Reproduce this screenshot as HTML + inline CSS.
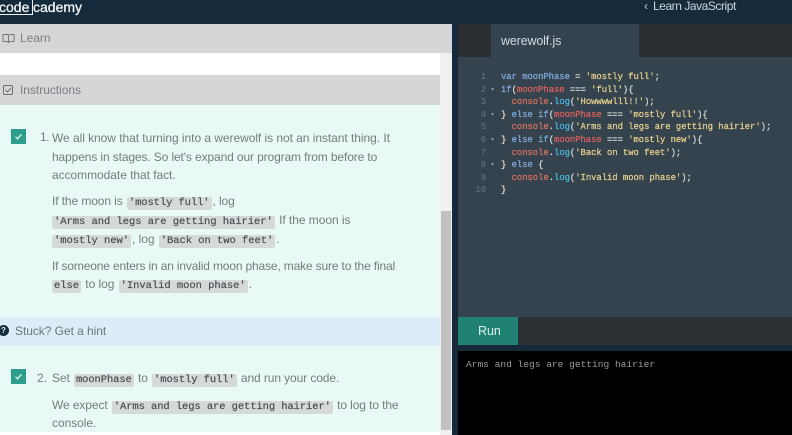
<!DOCTYPE html>
<html><head><meta charset="utf-8">
<style>
html,body{margin:0;padding:0;width:792px;height:435px;overflow:hidden;background:#fff}
body{position:relative;font-family:"Liberation Sans",sans-serif}
.b{position:absolute}
.t{position:absolute;white-space:nowrap;font-size:12px;line-height:16px;color:#757d7e;letter-spacing:-.05px}
.t code{font-family:"Liberation Mono",monospace;font-size:10.5px;line-height:13px;display:inline-block;color:#4a4f52;background:#d6d9da;padding:0 2px;border-radius:2px;margin:0 1px;-webkit-text-stroke:.2px #4a4f52;vertical-align:0}
.c{position:absolute;left:501px;white-space:pre;font:8.83px/12px "Liberation Mono",monospace;color:#d6d8d2;-webkit-text-stroke:.25px}
.n{position:absolute;width:27px;left:459px;text-align:right;font:8.83px/12px "Liberation Mono",monospace;color:#6c7883}
.a{position:absolute;left:491px;font-size:6px;line-height:12px;color:#8a949c}
.k{color:#7fa8d8}.v{color:#d9605f}.s{color:#e3cf8c}.f{color:#46b4d8}.o{color:#d4735f}
.chk{position:absolute;left:11px;width:15px;height:15px;background:#2b9f8b}
</style></head><body>
<div class="b" style="left:0;top:0;width:792px;height:24px;background:#152b3b"></div>
<div class="t" style="left:-1px;top:-1px;font-size:14px;line-height:16px;color:#eef2f4;letter-spacing:0;-webkit-text-stroke:.3px #eef2f4">code</div>
<div class="b" style="left:0;top:14px;width:32px;height:1px;background:#eef2f4"></div>
<div class="b" style="left:32px;top:0;width:1px;height:15px;background:#eef2f4"></div>
<div class="t" style="left:33px;top:-1px;font-size:14px;line-height:16px;color:#eef2f4;letter-spacing:0;-webkit-text-stroke:.3px #eef2f4">cademy</div>
<div class="t" style="left:644px;top:-2px;font-size:12px;line-height:16px;color:#c3ccd2">‹</div>
<div class="t" style="left:653px;top:-2px;font-size:12px;line-height:16px;color:#ccd4d9;letter-spacing:-.45px">Learn JavaScript</div>

<!-- left panel -->
<div class="b" style="left:440px;top:53px;width:12px;height:382px;background:#f0f0f0"></div>
<div class="b" style="left:0;top:24px;width:452px;height:29px;background:#d5d6d8"></div>
<div class="b" style="left:0;top:75px;width:440px;height:30px;background:#d5d6d8"></div>
<div class="b" style="left:0;top:105px;width:440px;height:212px;background:#e9f9f6"></div>
<div class="b" style="left:0;top:317px;width:440px;height:29px;background:#dcedf8"></div>
<div class="b" style="left:0;top:346px;width:440px;height:86px;background:#e9f9f6"></div>
<div class="b" style="left:441px;top:211px;width:10px;height:219px;background:#c1c1c1"></div>

<svg class="b" style="left:2px;top:33px" width="13" height="11" viewBox="0 0 13 11" fill="none" stroke="#77797d" stroke-width="1"><path d="M1 1.500h4.500l1 1 1-1H12v7H7.500l-1 1-1-1H1zM6.500 2.500v6.500"/></svg>
<div class="t" style="left:20px;top:30px;color:#7b7f83">Learn</div>
<svg class="b" style="left:2px;top:84px" width="12" height="12" viewBox="0 0 12 12" fill="none" stroke="#6b6f73" stroke-width="1"><rect x="1.500" y="1.500" width="9" height="9" rx="1"/><path d="M3.500 6l2 2 3.500-4"/></svg>
<div class="t" style="left:20px;top:82px;color:#7b7f83;letter-spacing:-.03px">Instructions</div>

<div class="chk" style="top:129px"></div>
<svg class="b" style="left:11px;top:129px" width="15" height="15" fill="none" stroke="#dff5ef" stroke-width="1.300"><path d="M4.500 7.800l2 2 4-4.500"/></svg>
<div class="t" style="left:40px;top:129px;letter-spacing:-.6px">1.</div>
<div class="t" style="left:52px;top:130px">We all know that turning into a werewolf is not an instant thing. It</div>
<div class="t" style="left:52px;top:149px;letter-spacing:-.12px">happens in stages. So let's expand our program from before to</div>
<div class="t" style="left:52px;top:167px">accommodate that fact.</div>
<div class="t" style="left:52px;top:193px;letter-spacing:-.1px">If the moon is <code>'mostly full'</code>, log</div>
<div class="t" style="left:52px;top:212px"><code style="margin-left:0">'Arms and legs are getting hairier'</code> If the moon is</div>
<div class="t" style="left:52px;top:231px"><code style="margin-left:0">'mostly new'</code>, log <code>'Back on two feet'</code>.</div>
<div class="t" style="left:52px;top:258px;letter-spacing:-.16px">If someone enters in an invalid moon phase, make sure to the final</div>
<div class="t" style="left:52px;top:276px"><code style="margin-left:0">else</code> to log <code>'Invalid moon phase'</code>.</div>

<div class="b" style="left:-2px;top:325px;width:11px;height:11px;border-radius:50%;background:#17303f;color:#e6eef2;font:bold 8px/11px 'Liberation Sans',sans-serif;text-align:center">?</div>
<div class="t" style="left:15px;top:323px;color:#6c7678">Stuck? Get a hint</div>

<div class="chk" style="top:369px"></div>
<svg class="b" style="left:11px;top:369px" width="15" height="15" fill="none" stroke="#dff5ef" stroke-width="1.300"><path d="M4.500 7.800l2 2 4-4.500"/></svg>
<div class="t" style="left:37px;top:370px">2.</div>
<div class="t" style="left:52px;top:370px;letter-spacing:-.1px">Set <code>moonPhase</code> to <code>'mostly full'</code> and run your code.</div>
<div class="t" style="left:52px;top:397px;letter-spacing:-.1px">We expect <code>'Arms and legs are getting hairier'</code> to log to the</div>
<div class="t" style="left:52px;top:415px">console.</div>

<!-- right panel -->
<div class="b" style="left:452px;top:24px;width:340px;height:411px;background:#15293a"></div>
<div class="b" style="left:458px;top:24px;width:334px;height:33px;background:#2c2f31"></div>
<div class="b" style="left:491px;top:24px;width:148px;height:33px;background:#34434f"></div>
<div class="t" style="left:501px;top:33px;font-size:12.500px;color:#d3d9dd;letter-spacing:-.15px">werewolf.js</div>
<div class="b" style="left:458px;top:57px;width:334px;height:260px;background:#35434f"></div>

<div class="n" style="top:71px">1</div><div class="n" style="top:83.500px">2</div><div class="n" style="top:96px">3</div><div class="n" style="top:108.500px">4</div><div class="n" style="top:121px">5</div><div class="n" style="top:134px">6</div><div class="n" style="top:146.500px">7</div><div class="n" style="top:159px">8</div><div class="n" style="top:171.500px">9</div><div class="n" style="top:184px">10</div>
<div class="a" style="top:83.500px">▾</div><div class="a" style="top:108.500px">▾</div><div class="a" style="top:134px">▾</div><div class="a" style="top:159px">▾</div>

<div class="c" style="top:71px"><span class="k">var moonPhase</span> = <span class="s">'mostly full'</span>;</div>
<div class="c" style="top:83.500px"><span class="k">if</span>(<span class="v">moonPhase</span> === <span class="s">'full'</span>){</div>
<div class="c" style="top:96px">  <span class="o">console</span>.<span class="f">log</span>(<span class="s">'Howwwwlll!!'</span>);</div>
<div class="c" style="top:108.500px">} <span class="k">else if</span>(<span class="v">moonPhase</span> === <span class="s">'mostly full'</span>){</div>
<div class="c" style="top:121px">  <span class="o">console</span>.<span class="f">log</span>(<span class="s">'Arms and legs are getting hairier'</span>);</div>
<div class="c" style="top:134px">} <span class="k">else if</span>(<span class="v">moonPhase</span> === <span class="s">'mostly new'</span>){</div>
<div class="c" style="top:146.500px">  <span class="o">console</span>.<span class="f">log</span>(<span class="s">'Back on two feet'</span>);</div>
<div class="c" style="top:159px">} <span class="k">else</span> {</div>
<div class="c" style="top:171.500px">  <span class="o">console</span>.<span class="f">log</span>(<span class="s">'Invalid moon phase'</span>);</div>
<div class="c" style="top:184px">}</div>

<div class="b" style="left:458px;top:317px;width:334px;height:28px;background:#2e3133"></div>
<div class="b" style="left:458px;top:317px;width:60px;height:28px;background:#1f8272"></div>
<div class="t" style="left:478px;top:323px;font-size:12.500px;color:#dff1ee">Run</div>
<div class="b" style="left:458px;top:351px;width:334px;height:84px;background:#000"></div>
<div class="t" style="left:466px;top:358px;font:9.550px/14px 'Liberation Mono',monospace;color:#9a9a9a;letter-spacing:0">Arms and legs are getting hairier</div>
</body></html>
